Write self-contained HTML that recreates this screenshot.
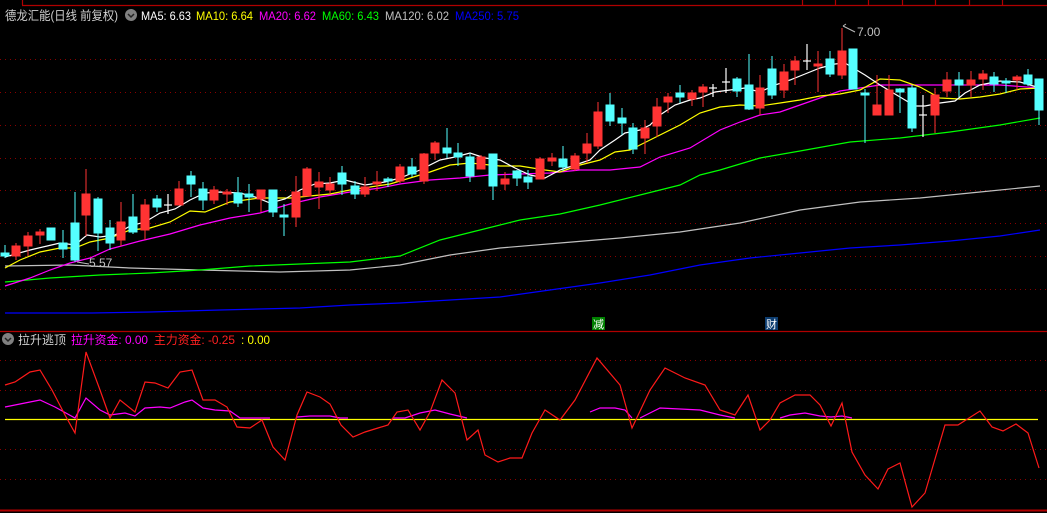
<!DOCTYPE html>
<html><head><meta charset="utf-8"><style>
html,body{margin:0;padding:0;background:#000;width:1047px;height:513px;overflow:hidden}
svg{display:block}
text{font-family:"Liberation Sans","Noto Sans CJK SC",sans-serif}
</style></head><body>
<svg width="1047" height="513" viewBox="0 0 1047 513" xmlns="http://www.w3.org/2000/svg">
<rect width="1047" height="513" fill="#000"/>
<g stroke="#b00000" stroke-width="1.2" fill="none">
<line x1="22" y1="5.5" x2="1047" y2="5.5"/><line x1="22.5" y1="0" x2="22.5" y2="5"/>
<line x1="802.5" y1="0" x2="802.5" y2="5"/><line x1="835.5" y1="0" x2="835.5" y2="5"/><line x1="868.5" y1="0" x2="868.5" y2="5"/><line x1="902.5" y1="0" x2="902.5" y2="5"/><line x1="935.5" y1="0" x2="935.5" y2="5"/><line x1="969.5" y1="0" x2="969.5" y2="5"/><line x1="1002.5" y1="0" x2="1002.5" y2="5"/>
<line x1="0" y1="331.5" x2="1047" y2="331.5"/>
<line x1="0" y1="510.5" x2="1047" y2="510.5" stroke-width="2"/>
</g>
<g stroke="#8a0000" stroke-width="1" stroke-dasharray="1,4">
<line x1="0" y1="59.5" x2="1047" y2="59.5"/><line x1="0" y1="92.5" x2="1047" y2="92.5"/><line x1="0" y1="125.5" x2="1047" y2="125.5"/><line x1="0" y1="158.5" x2="1047" y2="158.5"/><line x1="0" y1="190.5" x2="1047" y2="190.5"/><line x1="0" y1="223.5" x2="1047" y2="223.5"/><line x1="0" y1="256.5" x2="1047" y2="256.5"/><line x1="0" y1="289.5" x2="1047" y2="289.5"/>
<line x1="0" y1="360.5" x2="1047" y2="360.5"/><line x1="0" y1="390.5" x2="1047" y2="390.5"/><line x1="0" y1="449.5" x2="1047" y2="449.5"/><line x1="0" y1="479.5" x2="1047" y2="479.5"/>
</g>
<text x="5" y="20" font-size="12.5" fill="#d0d0d0" textLength="113" lengthAdjust="spacingAndGlyphs">德龙汇能(日线 前复权)</text>
<circle cx="131" cy="15" r="6" fill="#808080"/><path d="M128 14l3 3 3-3" stroke="#222" stroke-width="1.5" fill="none"/>
<text x="141" y="20" font-size="12" fill="#fff" textLength="50" lengthAdjust="spacingAndGlyphs">MA5: 6.63</text>
<text x="196" y="20" font-size="12" fill="#ffff00" textLength="57" lengthAdjust="spacingAndGlyphs">MA10: 6.64</text>
<text x="259" y="20" font-size="12" fill="#ff00ff" textLength="57" lengthAdjust="spacingAndGlyphs">MA20: 6.62</text>
<text x="322" y="20" font-size="12" fill="#00ff00" textLength="57" lengthAdjust="spacingAndGlyphs">MA60: 6.43</text>
<text x="385" y="20" font-size="12" fill="#c0c0c0" textLength="64" lengthAdjust="spacingAndGlyphs">MA120: 6.02</text>
<text x="455" y="20" font-size="12" fill="#0000ff" textLength="64" lengthAdjust="spacingAndGlyphs">MA250: 5.75</text>
<g fill="none" stroke-width="1.2">
<polyline stroke="#0000ff" points="5,313 92,313 150,312 185,311 220,310 300,308 350,305 400,303 450,300 500,297 550,290 600,283 650,275 700,265 750,258 800,253 850,248 900,245 950,241 1000,236 1040,230"/>
<polyline stroke="#c0c0c0" points="5,266 70,265 130,268 200,270 280,272 350,270 400,265 450,255 500,248 560,243 620,238 680,232 740,223 800,210 860,202 920,198 980,192 1040,186"/>
<polyline stroke="#00ff00" points="5,282 50,278 100,275 150,273 200,270 250,266 300,264 350,262 400,256 440,240 480,230 520,220 560,214 600,205 640,195 680,185 700,175 720,170 760,158 800,151 850,142 900,138 950,132 1000,125 1040,118"/>
<polyline stroke="#ff00ff" points="5,286 30,278 50,270 70,263 90,258 110,249 140,241 170,234 200,225 230,218 260,213 290,204 320,197 350,192 380,188 400,184 430,180 460,178 490,175 520,174 550,173 580,170 610,170 640,167 660,157 690,148 720,130 740,122 760,115 780,112 800,105 820,98 840,91 860,88 880,85 900,85 950,85 1000,85 1040,88"/>
<polyline stroke="#ffff00" points="5,268 20,260 40,252 60,248 75,248 90,242 110,238 130,230 150,228 170,222 190,211 205,212 230,202 260,198 290,198 310,196 330,194 350,190 370,187 390,184 410,178 430,172 450,165 470,163 500,166 520,166 545,170 560,172 580,165 600,160 615,152 630,150 650,140 680,125 700,113 720,107 740,105 760,106 780,103 800,100 820,96 840,94 860,90 880,79 900,80 920,87 940,98 960,99 980,97 1000,94 1020,89 1040,88"/>
<polyline stroke="#ffffff" points="5,257 30,250 60,243 75,245 87,235 100,237 115,235 130,226 145,222 160,213 175,209 190,200 205,193 220,192 240,193 255,197 270,203 285,199 300,190 315,184 330,183 345,180 365,185 385,182 400,178 420,170 440,160 455,157 470,153 485,158 500,160 515,168 530,175 545,178 560,170 575,165 590,160 600,150 615,140 625,133 640,130 650,125 660,115 675,105 690,100 700,98 715,92 730,90 745,88 760,92 775,85 790,80 805,74 820,68 835,64 845,63 855,69 865,75 880,85 900,97 915,106 925,106 940,103 955,101 965,93 980,85 1000,81 1020,82 1040,88"/>
</g>
<g stroke="#ff3333" fill="#ff3333">
<line x1="16" y1="243" x2="16" y2="260"/><rect x="12" y="246" width="8" height="10"/>
<line x1="28" y1="232" x2="28" y2="256"/><rect x="24" y="236" width="8" height="10"/>
<line x1="40" y1="229" x2="40" y2="244"/><rect x="36" y="232" width="8" height="3"/>
<line x1="86" y1="169" x2="86" y2="236"/><rect x="82" y="194" width="8" height="21"/>
<line x1="121" y1="202" x2="121" y2="246"/><rect x="117" y="222" width="8" height="18"/>
<line x1="145" y1="199" x2="145" y2="240"/><rect x="141" y="205" width="8" height="25"/>
<line x1="179" y1="181" x2="179" y2="205"/><rect x="175" y="189" width="8" height="16"/>
<line x1="214" y1="186" x2="214" y2="204"/><rect x="210" y="190" width="8" height="10"/>
<line x1="227" y1="189" x2="227" y2="205"/><rect x="223" y="192" width="8" height="2"/>
<line x1="261" y1="190" x2="261" y2="212"/><rect x="257" y="190" width="8" height="9"/>
<line x1="296" y1="176" x2="296" y2="227"/><rect x="292" y="192" width="8" height="25"/>
<line x1="307" y1="167" x2="307" y2="196"/><rect x="303" y="169" width="8" height="27"/>
<line x1="319" y1="172" x2="319" y2="209"/><rect x="315" y="182" width="8" height="5"/>
<line x1="330" y1="177" x2="330" y2="194"/><rect x="326" y="184" width="8" height="6"/>
<line x1="365" y1="177" x2="365" y2="197"/><rect x="361" y="187" width="8" height="7"/>
<line x1="377" y1="171" x2="377" y2="191"/><rect x="373" y="182" width="8" height="2"/>
<line x1="400" y1="164" x2="400" y2="183"/><rect x="396" y="167" width="8" height="14"/>
<line x1="424" y1="153" x2="424" y2="184"/><rect x="420" y="154" width="8" height="27"/>
<line x1="435" y1="141" x2="435" y2="160"/><rect x="431" y="143" width="8" height="10"/>
<line x1="481" y1="155" x2="481" y2="169"/><rect x="477" y="157" width="8" height="12"/>
<line x1="505" y1="172" x2="505" y2="190"/><rect x="501" y="179" width="8" height="5"/>
<line x1="540" y1="157" x2="540" y2="179"/><rect x="536" y="159" width="8" height="20"/>
<line x1="552" y1="153" x2="552" y2="166"/><rect x="548" y="158" width="8" height="3"/>
<line x1="575" y1="153" x2="575" y2="171"/><rect x="571" y="156" width="8" height="13"/>
<line x1="587" y1="133" x2="587" y2="163"/><rect x="583" y="144" width="8" height="9"/>
<line x1="598" y1="102" x2="598" y2="149"/><rect x="594" y="112" width="8" height="34"/>
<line x1="645" y1="120" x2="645" y2="154"/><rect x="641" y="128" width="8" height="10"/>
<line x1="657" y1="98" x2="657" y2="137"/><rect x="653" y="107" width="8" height="19"/>
<line x1="668" y1="93" x2="668" y2="113"/><rect x="664" y="97" width="8" height="5"/>
<line x1="692" y1="90" x2="692" y2="106"/><rect x="688" y="93" width="8" height="6"/>
<line x1="703" y1="84" x2="703" y2="107"/><rect x="699" y="87" width="8" height="5"/>
<line x1="760" y1="75" x2="760" y2="115"/><rect x="756" y="88" width="8" height="20"/>
<line x1="784" y1="64" x2="784" y2="98"/><rect x="780" y="72" width="8" height="18"/>
<line x1="795" y1="56" x2="795" y2="85"/><rect x="791" y="61" width="8" height="9"/>
<line x1="818" y1="51" x2="818" y2="92"/><rect x="814" y="64" width="8" height="2"/>
<line x1="842" y1="28" x2="842" y2="79"/><rect x="838" y="51" width="8" height="24"/>
<line x1="877" y1="75" x2="877" y2="115"/><rect x="873" y="105" width="8" height="10"/>
<line x1="889" y1="75" x2="889" y2="115"/><rect x="885" y="90" width="8" height="25"/>
<line x1="935" y1="88" x2="935" y2="133"/><rect x="931" y="95" width="8" height="20"/>
<line x1="947" y1="72" x2="947" y2="97"/><rect x="943" y="80" width="8" height="11"/>
<line x1="971" y1="71" x2="971" y2="97"/><rect x="967" y="80" width="8" height="5"/>
<line x1="983" y1="70" x2="983" y2="90"/><rect x="979" y="74" width="8" height="5"/>
<line x1="1017" y1="75" x2="1017" y2="90"/><rect x="1013" y="77" width="8" height="3"/>
</g>
<g stroke="#55ffff" fill="#55ffff">
<line x1="5" y1="245" x2="5" y2="258"/><rect x="1" y="253" width="8" height="3"/>
<line x1="51" y1="228" x2="51" y2="240"/><rect x="47" y="228" width="8" height="12"/>
<line x1="63" y1="230" x2="63" y2="258"/><rect x="59" y="243" width="8" height="6"/>
<line x1="75" y1="192" x2="75" y2="262"/><rect x="71" y="223" width="8" height="37"/>
<line x1="98" y1="197" x2="98" y2="251"/><rect x="94" y="199" width="8" height="34"/>
<line x1="110" y1="220" x2="110" y2="250"/><rect x="106" y="228" width="8" height="15"/>
<line x1="133" y1="194" x2="133" y2="234"/><rect x="129" y="217" width="8" height="15"/>
<line x1="157" y1="195" x2="157" y2="212"/><rect x="153" y="199" width="8" height="8"/>
<line x1="191" y1="171" x2="191" y2="197"/><rect x="187" y="176" width="8" height="8"/>
<line x1="203" y1="182" x2="203" y2="210"/><rect x="199" y="189" width="8" height="11"/>
<line x1="238" y1="177" x2="238" y2="207"/><rect x="234" y="193" width="8" height="10"/>
<line x1="249" y1="184" x2="249" y2="212"/><rect x="245" y="194" width="8" height="3"/>
<line x1="273" y1="190" x2="273" y2="217"/><rect x="269" y="190" width="8" height="22"/>
<line x1="284" y1="204" x2="284" y2="236"/><rect x="280" y="215" width="8" height="2"/>
<line x1="342" y1="166" x2="342" y2="195"/><rect x="338" y="173" width="8" height="11"/>
<line x1="355" y1="181" x2="355" y2="199"/><rect x="351" y="186" width="8" height="8"/>
<line x1="388" y1="177" x2="388" y2="187"/><rect x="384" y="179" width="8" height="2"/>
<line x1="412" y1="158" x2="412" y2="177"/><rect x="408" y="167" width="8" height="7"/>
<line x1="447" y1="128" x2="447" y2="158"/><rect x="443" y="148" width="8" height="5"/>
<line x1="458" y1="143" x2="458" y2="166"/><rect x="454" y="153" width="8" height="4"/>
<line x1="470" y1="153" x2="470" y2="182"/><rect x="466" y="157" width="8" height="19"/>
<line x1="493" y1="154" x2="493" y2="200"/><rect x="489" y="154" width="8" height="32"/>
<line x1="517" y1="170" x2="517" y2="186"/><rect x="513" y="171" width="8" height="7"/>
<line x1="528" y1="170" x2="528" y2="189"/><rect x="524" y="177" width="8" height="5"/>
<line x1="563" y1="146" x2="563" y2="171"/><rect x="559" y="159" width="8" height="8"/>
<line x1="610" y1="93" x2="610" y2="126"/><rect x="606" y="105" width="8" height="16"/>
<line x1="622" y1="108" x2="622" y2="135"/><rect x="618" y="118" width="8" height="5"/>
<line x1="633" y1="123" x2="633" y2="154"/><rect x="629" y="128" width="8" height="21"/>
<line x1="680" y1="85" x2="680" y2="103"/><rect x="676" y="93" width="8" height="4"/>
<line x1="737" y1="77" x2="737" y2="97"/><rect x="733" y="79" width="8" height="12"/>
<line x1="749" y1="54" x2="749" y2="110"/><rect x="745" y="85" width="8" height="24"/>
<line x1="772" y1="56" x2="772" y2="99"/><rect x="768" y="69" width="8" height="26"/>
<line x1="830" y1="51" x2="830" y2="77"/><rect x="826" y="59" width="8" height="15"/>
<line x1="853" y1="49" x2="853" y2="89"/><rect x="849" y="49" width="8" height="40"/>
<line x1="865" y1="89" x2="865" y2="143"/><rect x="861" y="93" width="8" height="2"/>
<line x1="900" y1="88" x2="900" y2="113"/><rect x="896" y="89" width="8" height="3"/>
<line x1="912" y1="85" x2="912" y2="132"/><rect x="908" y="88" width="8" height="40"/>
<line x1="959" y1="72" x2="959" y2="97"/><rect x="955" y="80" width="8" height="5"/>
<line x1="994" y1="72" x2="994" y2="92"/><rect x="990" y="77" width="8" height="7"/>
<line x1="1006" y1="78" x2="1006" y2="93"/><rect x="1002" y="81" width="8" height="2"/>
<line x1="1028" y1="69" x2="1028" y2="86"/><rect x="1024" y="75" width="8" height="9"/>
<line x1="1039" y1="79" x2="1039" y2="125"/><rect x="1035" y="79" width="8" height="31"/>
</g>
<g stroke="#fff" stroke-width="1.2">
<line x1="168" y1="194" x2="168" y2="214"/><line x1="164" y1="205" x2="172" y2="205"/>
<line x1="713" y1="84" x2="713" y2="97"/><line x1="709" y1="88" x2="717" y2="88"/>
<line x1="726" y1="68" x2="726" y2="93"/><line x1="722" y1="82" x2="730" y2="82"/>
<line x1="807" y1="44" x2="807" y2="70"/><line x1="803" y1="61" x2="811" y2="61"/>
<line x1="923" y1="95" x2="923" y2="137"/><line x1="919" y1="115" x2="927" y2="115"/>
</g>
<path d="M843 26l3-2 M843 26 l12 6" stroke="#bbb" fill="none"/>
<text x="857" y="36" font-size="12" fill="#c0c0c0">7.00</text>
<path d="M77 262 l12 2" stroke="#bbb" fill="none"/>
<text x="89" y="267" font-size="12" fill="#c0c0c0">5.57</text>
<rect x="592" y="317" width="13" height="13" fill="#008000"/>
<text x="593" y="328" font-size="11" fill="#fff">减</text>
<rect x="765" y="317" width="13" height="13" fill="#0d3d70"/>
<text x="766" y="328" font-size="11" fill="#fff">财</text>
<circle cx="8" cy="339" r="6" fill="#808080"/><path d="M5 338l3 3 3-3" stroke="#222" stroke-width="1.5" fill="none"/>
<text x="18" y="344" font-size="12" fill="#d0d0d0" textLength="48" lengthAdjust="spacingAndGlyphs">拉升逃顶</text>
<text x="71" y="344" font-size="12" fill="#ff00ff" textLength="77" lengthAdjust="spacingAndGlyphs">拉升资金: 0.00</text>
<text x="154" y="344" font-size="12" fill="#ff2020" textLength="81" lengthAdjust="spacingAndGlyphs">主力资金: -0.25</text>
<text x="241" y="344" font-size="12" fill="#ffff00" textLength="29" lengthAdjust="spacingAndGlyphs">: 0.00</text>
<line x1="5" y1="419.5" x2="1038" y2="419.5" stroke="#ffff00" stroke-width="1.3"/>
<g fill="none" stroke-width="1.2">
<g stroke="#ff00ff">
<polyline points="5,407 15,405 30,402 40,400 55,407 75,418 86,398 100,410 110,415 125,413 135,416 145,408 160,407 170,408 185,402 192,400 203,408 215,410 230,411 240,418 270,418"/>
<polyline points="297,417 310,416 330,416 340,418 348,418"/>
<polyline points="393,418 405,418 420,413 435,410 450,414 467,418"/>
<polyline points="590,412 600,408 615,408 625,410 632,418"/>
<polyline points="640,418 660,408 700,410 720,415 735,418"/>
<polyline points="780,418 790,415 805,413 820,416 831,417 842,416 852,418"/>
</g>
<polyline stroke="#ff1a1a" points="5,385 15,382 30,372 40,370 52,390 65,415 75,433 86,352 100,390 110,418 120,400 135,412 145,382 155,383 168,388 180,372 192,370 203,400 215,400 227,407 237,427 250,428 262,420 273,447 285,460 297,415 307,392 320,397 330,404 341,425 353,437 365,432 378,428 388,425 397,412 408,410 420,430 430,412 442,380 455,393 467,440 478,430 485,455 498,462 510,458 522,458 532,433 545,410 560,420 575,400 597,358 620,385 632,428 650,390 665,368 685,378 705,385 720,410 735,415 748,395 760,430 770,420 780,403 795,395 810,395 820,405 831,426 842,403 852,452 865,475 878,489 888,469 900,463 912,507 925,493 945,425 958,425 980,411 992,427 1003,431 1016,424 1028,433 1039,468"/>
</g>
</svg>
</body></html>
